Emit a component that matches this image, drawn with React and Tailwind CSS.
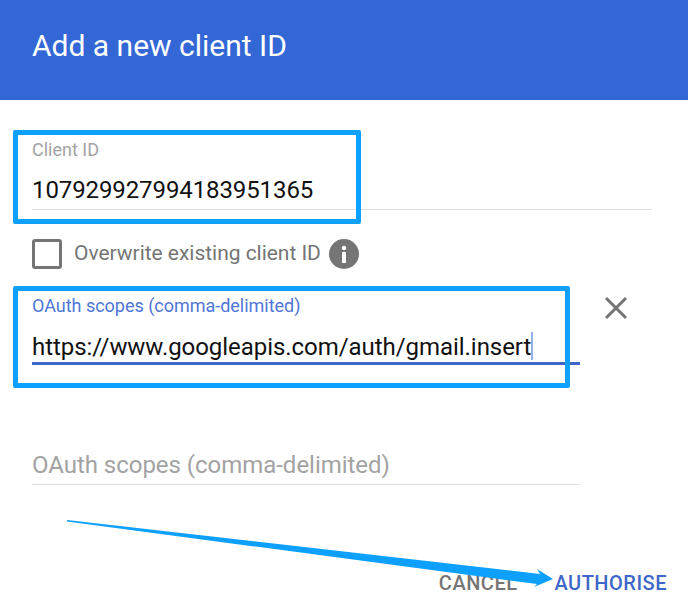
export default function App() {
  return (
    <div className="relative w-[688px] h-[611px] overflow-hidden bg-white font-['Roboto',sans-serif]">
      <header className="h-[100px] bg-[#3367d6] pl-8 pt-[27px]">
        <h1 className="text-[30px] leading-[38px] font-normal text-white">Add a new client ID</h1>
      </header>

      <main className="pl-8 pr-9">
        <section className="pt-[40px]">
          <div className="text-[18px] leading-5 text-[#a3a3a3]">Client ID</div>
          <div className="mt-[15px] text-2xl leading-[30px] tracking-[-0.1px] text-[#111111] border-b border-[#dfdfdf] h-[35px]">107929927994183951365</div>
        </section>

        <label className="mt-[29px] flex items-center h-[30px]">
          <span className="w-[30px] h-[30px] rounded-[3px] border-[3px] border-[#757575]" />
          <span className="ml-[12px] text-[21px] tracking-[-0.03px] text-[#757575]">Overwrite existing client ID</span>
          <span className="ml-[8px] w-[30px] h-[30px] rounded-full bg-[#757575] flex items-center justify-center">
            <svg width="30" height="30" viewBox="0 0 30 30" fill="white">
              <circle cx="15" cy="9" r="2.2" />
              <rect x="13" y="13" width="4" height="11" />
            </svg>
          </span>
        </label>

        <section className="mt-[27px] flex items-start">
          <div className="w-[548px]">
            <div className="text-[18px] leading-5 tracking-[-0.02px] text-[#4f76d6]">OAuth scopes (comma-delimited)</div>
            <div className="mt-[16px] h-[33px] border-b-[3px] border-[#3f66c9] text-2xl leading-[30px] tracking-[-0.05px] text-[#111111] flex items-start whitespace-nowrap">
              <span>https://www.googleapis.com/auth/gmail.insert</span>
              <span className="w-[2px] h-[28px] bg-[#8fb0e8]" />
            </div>
          </div>
          <svg className="ml-[23px] mt-[-1px]" width="26" height="26" viewBox="0 0 26 26" stroke="#757575" strokeWidth="3" fill="none">
            <path d="M3 3 L23 23 M23 3 L3 23" />
          </svg>
        </section>

        <section className="mt-[72px] w-[548px] h-[48px] border-b border-[#dfdfdf] pt-[13px]">
          <div className="text-[24px] leading-[30px] tracking-[-0.03px] text-[#a3a3a3]">OAuth scopes (comma-delimited)</div>
        </section>

        <footer className="mt-[86px] mr-[-15px] flex justify-end gap-[37px] text-[20px] font-medium leading-6 tracking-[0.5px]">
          <span className="text-[#757575]">CANCEL</span>
          <span className="text-[#3f66c9]">AUTHORISE</span>
        </footer>
      </main>

      <div className="absolute left-[13px] top-[130px] w-[348px] h-[94px] border-[5px] border-[#0ea0ff] rounded-[2px]" />
      <div className="absolute left-[13px] top-[286px] w-[557px] h-[102px] border-[5px] border-[#0ea0ff] rounded-[2px]" />

      <svg className="absolute left-0 top-0" width="688" height="611" viewBox="0 0 688 611" fill="#0ea0ff">
        <path d="M67 520 L540 574 L537 569 L553 579 L534 587 L537 584 L67 521.5 Z" />
      </svg>
    </div>
  );
}
